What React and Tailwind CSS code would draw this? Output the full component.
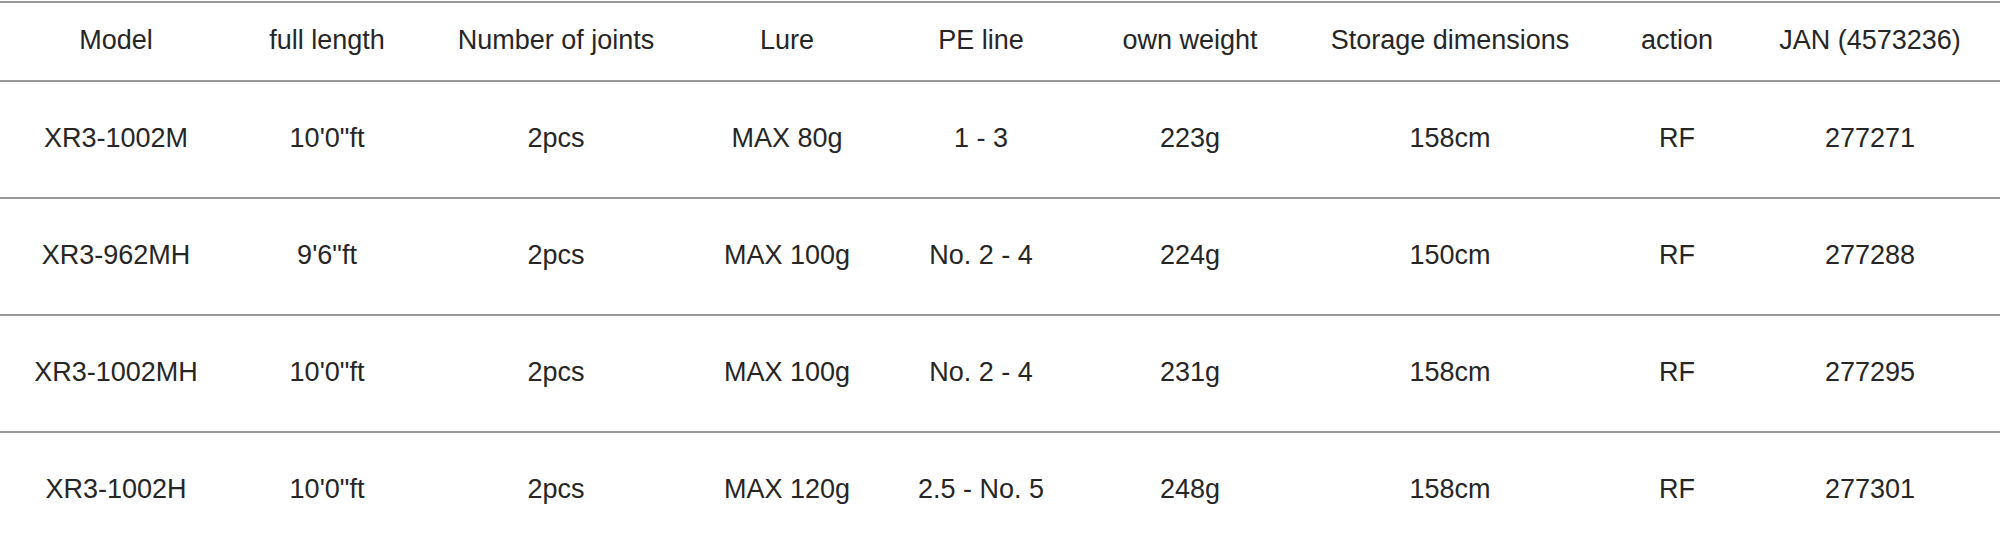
const headers = [
  "Model",
  "full length",
  "Number of joints",
  "Lure",
  "PE line",
  "own weight",
  "Storage dimensions",
  "action",
  "JAN (4573236)",
];

const rows = [
  ["XR3-1002M", "10'0\"ft", "2pcs", "MAX 80g", "1 - 3", "223g", "158cm", "RF", "277271"],
  ["XR3-962MH", "9'6\"ft", "2pcs", "MAX 100g", "No. 2 - 4", "224g", "150cm", "RF", "277288"],
  ["XR3-1002MH", "10'0\"ft", "2pcs", "MAX 100g", "No. 2 - 4", "231g", "158cm", "RF", "277295"],
  ["XR3-1002H", "10'0\"ft", "2pcs", "MAX 120g", "2.5 - No. 5", "248g", "158cm", "RF", "277301"],
];

const gridCols =
  "grid grid-cols-[232px_190px_268px_194px_194px_224px_296px_158px_1fr] pr-4";

function App() {
  return (
    <div
      className="w-[2000px] bg-white pt-[1px] text-[#262626]"
      style={{ fontFamily: '"Liberation Sans", Arial, sans-serif' }}
    >
      <div
        className={`${gridCols} h-[81px] items-center pb-[2px] border-t-2 border-b-2 border-[#999999] text-[27px]`}
      >
        {headers.map((h) => (
          <div key={h} className="text-center whitespace-nowrap">
            {h}
          </div>
        ))}
      </div>
      {rows.map((r, i) => (
        <div
          key={r[0]}
          className={`${gridCols} items-center pb-[2px] text-[27px] ${
            i < rows.length - 1 ? "h-[117px] border-b-2 border-[#999999]" : "h-[115px]"
          }`}
        >
          {r.map((c, j) => (
            <div key={j} className="text-center whitespace-nowrap">
              {c}
            </div>
          ))}
        </div>
      ))}
    </div>
  );
}

export default App;
